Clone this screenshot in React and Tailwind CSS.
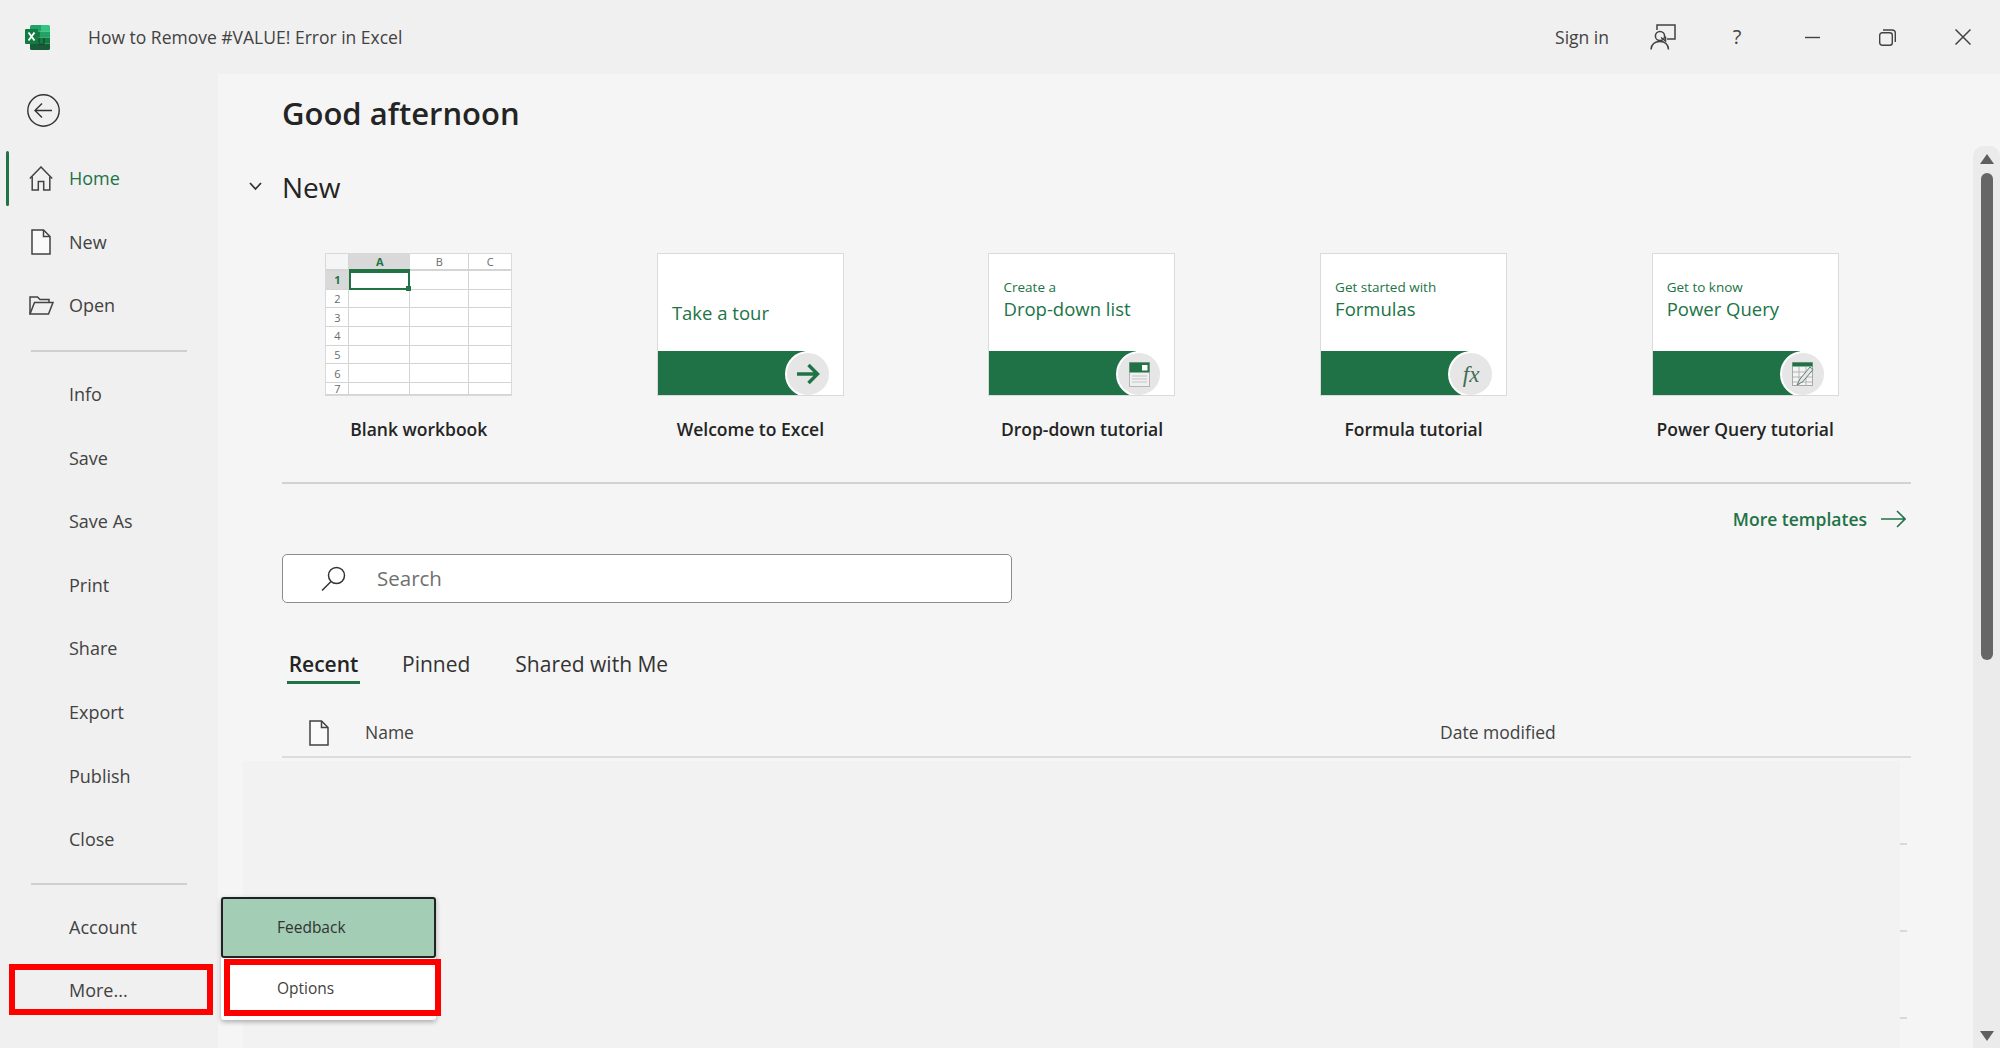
import React from "react";

const GREEN = "#217346";

const ExcelLogo = () => (
  <svg width="25" height="25" viewBox="0 0 25 25">
    <path d="M5 1.5 Q5 0 6.5 0 H16 V6.5 H5 Z" fill="#21a366" />
    <path d="M16 0 H23.5 Q25 0 25 1.5 V6.5 H16 Z" fill="#33c481" />
    <rect x="5" y="6.5" width="10" height="6" fill="#107c41" />
    <rect x="15" y="6.5" width="10" height="6" fill="#21a366" />
    <rect x="5" y="12.5" width="10" height="6" fill="#185c37" />
    <rect x="15" y="12.5" width="10" height="6" fill="#107c41" />
    <path d="M5 18.5 H25 V23.5 Q25 25 23.5 25 H6.5 Q5 25 5 23.5 Z" fill="#185c37" />
    <path d="M19 13 V19 H13" fill="none" stroke="#0d3d22" strokeWidth="1" />
    <rect x="0" y="4" width="13" height="15" rx="1" fill="#107c41" />
    <path d="M3.5 7.5 L9.5 15.5 M9.5 7.5 L3.5 15.5" stroke="#fff" strokeWidth="1.9" />
  </svg>
);

const FeedbackIcon = () => (
  <svg width="26" height="26" viewBox="0 0 26 26" fill="none" stroke="#424242" strokeWidth="1.5">
    <path d="M7 6 V1 H25 V15 H17" />
    <path d="M11 13.5 L15.5 17 V12.5" />
    <circle cx="10" cy="12" r="4.6" />
    <path d="M1 25.5 C1.5 20 5 17.6 10 17.6 C15 17.6 18 20 18.5 25.5" />
  </svg>
);

const HomeIcon = () => (
  <svg width="24" height="25" viewBox="0 0 24 25" fill="none" stroke="#424242" strokeWidth="1.5">
    <path d="M0.8 12.5 L12 1 L23.2 12.5" />
    <path d="M3.2 10.5 V24 H9.3 V15.5 H14.7 V24 H20.8 V10.5" />
  </svg>
);

const DocIcon = () => (
  <svg width="20" height="26" viewBox="0 0 20 26" fill="#fafafa" stroke="#424242" strokeWidth="1.5">
    <path d="M1 1 H12.5 L19 7.5 V25 H1 Z" />
    <path d="M12.5 1 V7.5 H19" fill="none" />
  </svg>
);

const FolderIcon = () => (
  <svg width="25" height="19" viewBox="0 0 25 19" fill="none" stroke="#424242" strokeWidth="1.5">
    <path d="M1 18 V1 H8.5 L11 3.5 H20 V6.5" />
    <path d="M1 18 H19.5 L24 6.5 H5.5 L1 18 Z" />
  </svg>
);

const items = ["Info", "Save", "Save As", "Print", "Share", "Export", "Publish", "Close"];

const NavRow = ({ icon, label, active }) => (
  <div className="relative flex h-[63.6px] items-center">
    {active && <div className="absolute left-[6px] top-[4px] h-[55px] w-[3px] rounded-full bg-[#217346]" />}
    <div className="flex w-[69px] shrink-0 justify-center pl-[19px] pr-[6px]">{icon}</div>
    <span className={active ? "text-[#217346]" : "text-[#424242]"}>{label}</span>
  </div>
);

const BlankThumb = () => {
  const rows = ["1", "2", "3", "4", "5", "6", "7"];
  return (
    <div className="grid h-[143px] w-[187px] grid-cols-[23px_61px_59px_1fr] grid-rows-[17px_repeat(6,18.7px)_1fr] overflow-hidden border border-[#d9d9d9] bg-white text-[11px] leading-none text-[#6a6a6a]">
      <div className="border-b-2 border-r border-[#d4d4d4] bg-[#f5f5f5]" />
      <div className="flex items-center justify-center border-b-2 border-[#217346] bg-[#d9d9d9] font-bold text-[#217346]">A</div>
      <div className="flex items-center justify-center border-b-2 border-r border-[#d4d4d4]">B</div>
      <div className="flex items-center justify-center border-b-2 border-[#d4d4d4]">C</div>
      {rows.map((r, i) => (
        <React.Fragment key={r}>
          <div
            className={
              i === 0
                ? "flex items-center justify-center border-b border-r border-[#d4d4d4] bg-[#d9d9d9] font-bold text-[#217346]"
                : "flex items-center justify-center border-b border-r border-[#d4d4d4]"
            }
          >
            {r}
          </div>
          <div className={i === 0 ? "relative border-2 border-[#217346]" : "border-b border-r border-[#d4d4d4]"}>
            {i === 0 && <div className="absolute -bottom-[3px] -right-[3px] h-[5px] w-[5px] bg-[#217346]" />}
          </div>
          <div className="border-b border-r border-[#d4d4d4]" />
          <div className="border-b border-[#d4d4d4]" />
        </React.Fragment>
      ))}
    </div>
  );
};

const TutorialThumb = ({ top, main, children }) => (
  <div className="relative flex h-[143px] w-[187px] flex-col overflow-hidden border border-[#dadada] bg-white text-[#217346]">
    <div className="flex h-[98px] flex-col justify-start pl-[14px]">
      {top ? (
        <>
          <span className="mt-[24px] text-[13.5px] leading-[18px]">{top}</span>
          <span className="text-[18.5px] leading-[26px]">{main}</span>
        </>
      ) : (
        <span className="mt-[46px] text-[18.5px] leading-[26px]">{main}</span>
      )}
    </div>
    <div className="h-[44px] w-[147px] bg-[#1f7246]" />
    <div className="absolute bottom-[-2px] left-[127px] flex h-[46px] w-[46px] items-center justify-center rounded-full border-2 border-white bg-[#e6e6e6]">
      {children}
    </div>
  </div>
);

const templates = [
  { name: "Blank workbook", thumb: <BlankThumb /> },
  {
    name: "Welcome to Excel",
    thumb: (
      <TutorialThumb main="Take a tour">
        <svg width="24" height="22" viewBox="0 0 24 22" fill="none" stroke="#217346" strokeWidth="3.4">
          <path d="M1 11 H21 M12.5 2 L21.5 11 L12.5 20" />
        </svg>
      </TutorialThumb>
    ),
  },
  {
    name: "Drop-down tutorial",
    thumb: (
      <TutorialThumb top="Create a" main="Drop-down list">
        <svg width="21" height="25" viewBox="0 0 21 25">
          <rect x="0.5" y="0.5" width="20" height="24" fill="#f0f0f0" stroke="#b5b5b5" />
          <rect x="0.5" y="0.5" width="20" height="10" fill="#217346" />
          <rect x="13" y="3" width="5.5" height="5.5" fill="#fff" />
          <path d="M3 14 H18 M3 17 H18 M3 20 H18" stroke="#c4c4c4" />
        </svg>
      </TutorialThumb>
    ),
  },
  {
    name: "Formula tutorial",
    thumb: (
      <TutorialThumb top="Get started with" main="Formulas">
        <span className="text-[23px] italic leading-none text-[#3f6d52] [font-family:'Liberation_Serif',serif]">fx</span>
      </TutorialThumb>
    ),
  },
  {
    name: "Power Query tutorial",
    thumb: (
      <TutorialThumb top="Get to know" main="Power Query">
        <svg width="22" height="25" viewBox="0 0 22 25" fill="none">
          <rect x="0.5" y="0.5" width="20" height="23" fill="#f4f4f4" stroke="#a8a8a8" />
          <rect x="0.5" y="0.5" width="20" height="4" fill="#217346" />
          <path d="M7 5 V24 M14 5 V24 M1 10 H20 M1 15 H20 M1 20 H20" stroke="#b4b4b4" />
          <path d="M5 23 L8 17 L18 5 L21 7.5 L11 19.5 Z" fill="#e6e6e6" stroke="#5c7f6b" />
        </svg>
      </TutorialThumb>
    ),
  },
];

const App = () => {
  return (
    <div className="relative flex h-[1048px] w-[2000px] flex-col overflow-hidden bg-[#f0f0f0] text-[18px] text-[#424242] [font-family:'Open_Sans',sans-serif]">
      {/* title bar */}
      <div className="flex h-[74px] shrink-0 items-center">
        <div className="ml-[25px] w-[63px] shrink-0">
          <ExcelLogo />
        </div>
        <span className="text-[17.5px]">How to Remove #VALUE! Error in Excel</span>
        <div className="ml-auto flex items-center">
          <span className="text-[17.5px]">Sign in</span>
          <div className="ml-[41px]"><FeedbackIcon /></div>
          <span className="ml-[54px] w-[14px] text-center text-[20px]">?</span>
          <svg className="ml-[61px]" width="15" height="15" viewBox="0 0 15 15" stroke="#424242" strokeWidth="1.4">
            <path d="M0 7.5 H15" />
          </svg>
          <svg className="ml-[59px]" width="17" height="17" viewBox="0 0 17 17" fill="none" stroke="#424242" strokeWidth="1.4">
            <rect x="0.7" y="3.7" width="12.6" height="12.6" rx="2.5" />
            <path d="M4 1 H13 Q16.3 1 16.3 4 V13" />
          </svg>
          <svg className="ml-[59px] mr-[29px]" width="16" height="16" viewBox="0 0 16 16" stroke="#424242" strokeWidth="1.5">
            <path d="M0.5 0.5 L15.5 15.5 M15.5 0.5 L0.5 15.5" />
          </svg>
        </div>
      </div>

      <div className="flex min-h-0 flex-1">
        {/* sidebar */}
        <div className="w-[218px] shrink-0">
          <div className="flex h-[73px] items-center pl-[27px]">
            <svg width="33" height="33" viewBox="0 0 33 33" fill="none" stroke="#333" strokeWidth="1.4">
              <circle cx="16.5" cy="16.5" r="15.7" />
              <path d="M8 16.5 H25 M15 9.5 L8 16.5 L15 23.5" />
            </svg>
          </div>
          <NavRow active label="Home" icon={<HomeIcon />} />
          <NavRow label="New" icon={<DocIcon />} />
          <NavRow label="Open" icon={<FolderIcon />} />
          <div className="mb-[11px] ml-[31px] mt-[12px] h-[2px] w-[156px] bg-[#cfcfcf]" />
          {items.map((item) => (
            <NavRow key={item} label={item} />
          ))}
          <div className="mb-[11px] ml-[31px] mt-[11px] h-[2px] w-[156px] bg-[#cfcfcf]" />
          <NavRow label="Account" />
          <NavRow label="More..." />
        </div>

        {/* main */}
        <div className="flex min-w-0 flex-1 bg-[#f5f5f5]">
          <div className="flex min-w-0 flex-1 flex-col pl-[64px] pr-[62px]">
            <h1 className="flex h-[78px] shrink-0 items-center text-[31px] font-semibold text-[#242424]">Good afternoon</h1>
            <div className="relative flex h-[70px] shrink-0 items-center">
              <svg className="absolute -left-[33px] top-[30px]" width="13" height="9" viewBox="0 0 13 9" fill="none" stroke="#333" strokeWidth="1.8">
                <path d="M1 1 L6.5 7 L12 1" />
              </svg>
              <span className="text-[28px] font-medium leading-none text-[#242424]">New</span>
            </div>

            <div className="-ml-[29px] mt-[31px] flex shrink-0">
              {templates.map((t) => (
                <div key={t.name} className="flex w-[337px] flex-col items-center">
                  {t.thumb}
                  <span className="mt-[20px] text-[17.5px] font-semibold leading-[26px] text-[#242424]">{t.name}</span>
                </div>
              ))}
            </div>

            <div className="mt-[40px] h-[2px] shrink-0 bg-[#d2d2d2]" />
            <div className="mt-[21px] flex h-[28px] shrink-0 items-center justify-end gap-[14px] pr-[5px] text-[17.5px] font-semibold text-[#217346]">
              <span>More templates</span>
              <svg width="25" height="18" viewBox="0 0 25 18" fill="none" stroke="#217346" strokeWidth="1.6">
                <path d="M0 9 H24 M16 1 L24 9 L16 17" />
              </svg>
            </div>

            <div className="mt-[21px] flex h-[49px] w-[730px] shrink-0 items-center rounded-[5px] border border-[#8c8c8c] bg-white">
              <svg className="ml-[38px]" width="25" height="25" viewBox="0 0 25 25" fill="none" stroke="#333" strokeWidth="1.5">
                <circle cx="15.5" cy="9.5" r="8" />
                <path d="M10 15.5 L1 24.5" />
              </svg>
              <span className="ml-[31px] text-[20.5px] text-[#707070]">Search</span>
            </div>

            <div className="mt-[43px] flex h-[38px] shrink-0 items-start text-[21px] leading-[36px] text-[#333]">
              <div className="ml-[5px] flex h-[38px] w-[73px] justify-center border-b-[3px] border-[#217346] font-semibold text-[#242424]">Recent</div>
              <span className="ml-[42px]">Pinned</span>
              <span className="ml-[45px]">Shared with Me</span>
            </div>

            <div className="mt-[25px] flex h-[49px] shrink-0 items-center border-b-2 border-[#dcdcdc] text-[17.5px] text-[#424242]">
              <div className="ml-[27px] w-[56px]"><DocIcon /></div>
              <span className="w-[1075px]">Name</span>
              <span>Date modified</span>
            </div>

            <div className="mt-[3px] flex min-h-0 flex-1">
              <div className="-ml-[39px] flex-1 bg-[#f2f2f2]" />
              <div className="flex w-[7px] shrink-0 flex-col gap-[85px] pt-[82px]">
                <div className="h-[2px] bg-[#d9d9d9]" />
                <div className="h-[2px] bg-[#d9d9d9]" />
                <div className="h-[2px] bg-[#d9d9d9]" />
              </div>
              <div className="w-[4px] shrink-0" />
            </div>
          </div>

          {/* scrollbar */}
          <div className="mt-[72px] flex w-[27px] shrink-0 flex-col items-center rounded-t-[10px] bg-[#ebebeb] pb-[7px] pt-[8px]">
            <svg width="14" height="10" viewBox="0 0 14 10" fill="#5f5f5f"><path d="M7 0 L14 10 H0 Z" /></svg>
            <div className="mt-[9px] h-[487px] w-[12px] rounded-full bg-[#666]" />
            <svg className="mt-auto" width="14" height="10" viewBox="0 0 14 10" fill="#5f5f5f"><path d="M0 0 H14 L7 10 Z" /></svg>
          </div>
        </div>
      </div>

      {/* more... menu */}
      <div className="absolute left-[221px] top-[897px] flex h-[123px] w-[215px] flex-col rounded-[3px] bg-white text-[15.5px] shadow-[0_2px_5px_rgba(0,0,0,0.3)]">
        <div className="flex h-[61px] items-center rounded-[3px] border-2 border-[#222] bg-[#a3cdb4] pl-[54px] text-[#333]">Feedback</div>
        <div className="flex flex-1 items-center pl-[56px] text-[#424242]">Options</div>
      </div>

      {/* red highlight boxes */}
      <div className="absolute left-[9px] top-[964px] h-[51px] w-[204px] border-[6px] border-[#ff0000]" />
      <div className="absolute left-[224px] top-[959px] h-[57px] w-[217px] border-[6px] border-[#ff0000]" />
    </div>
  );
};

export default App;
